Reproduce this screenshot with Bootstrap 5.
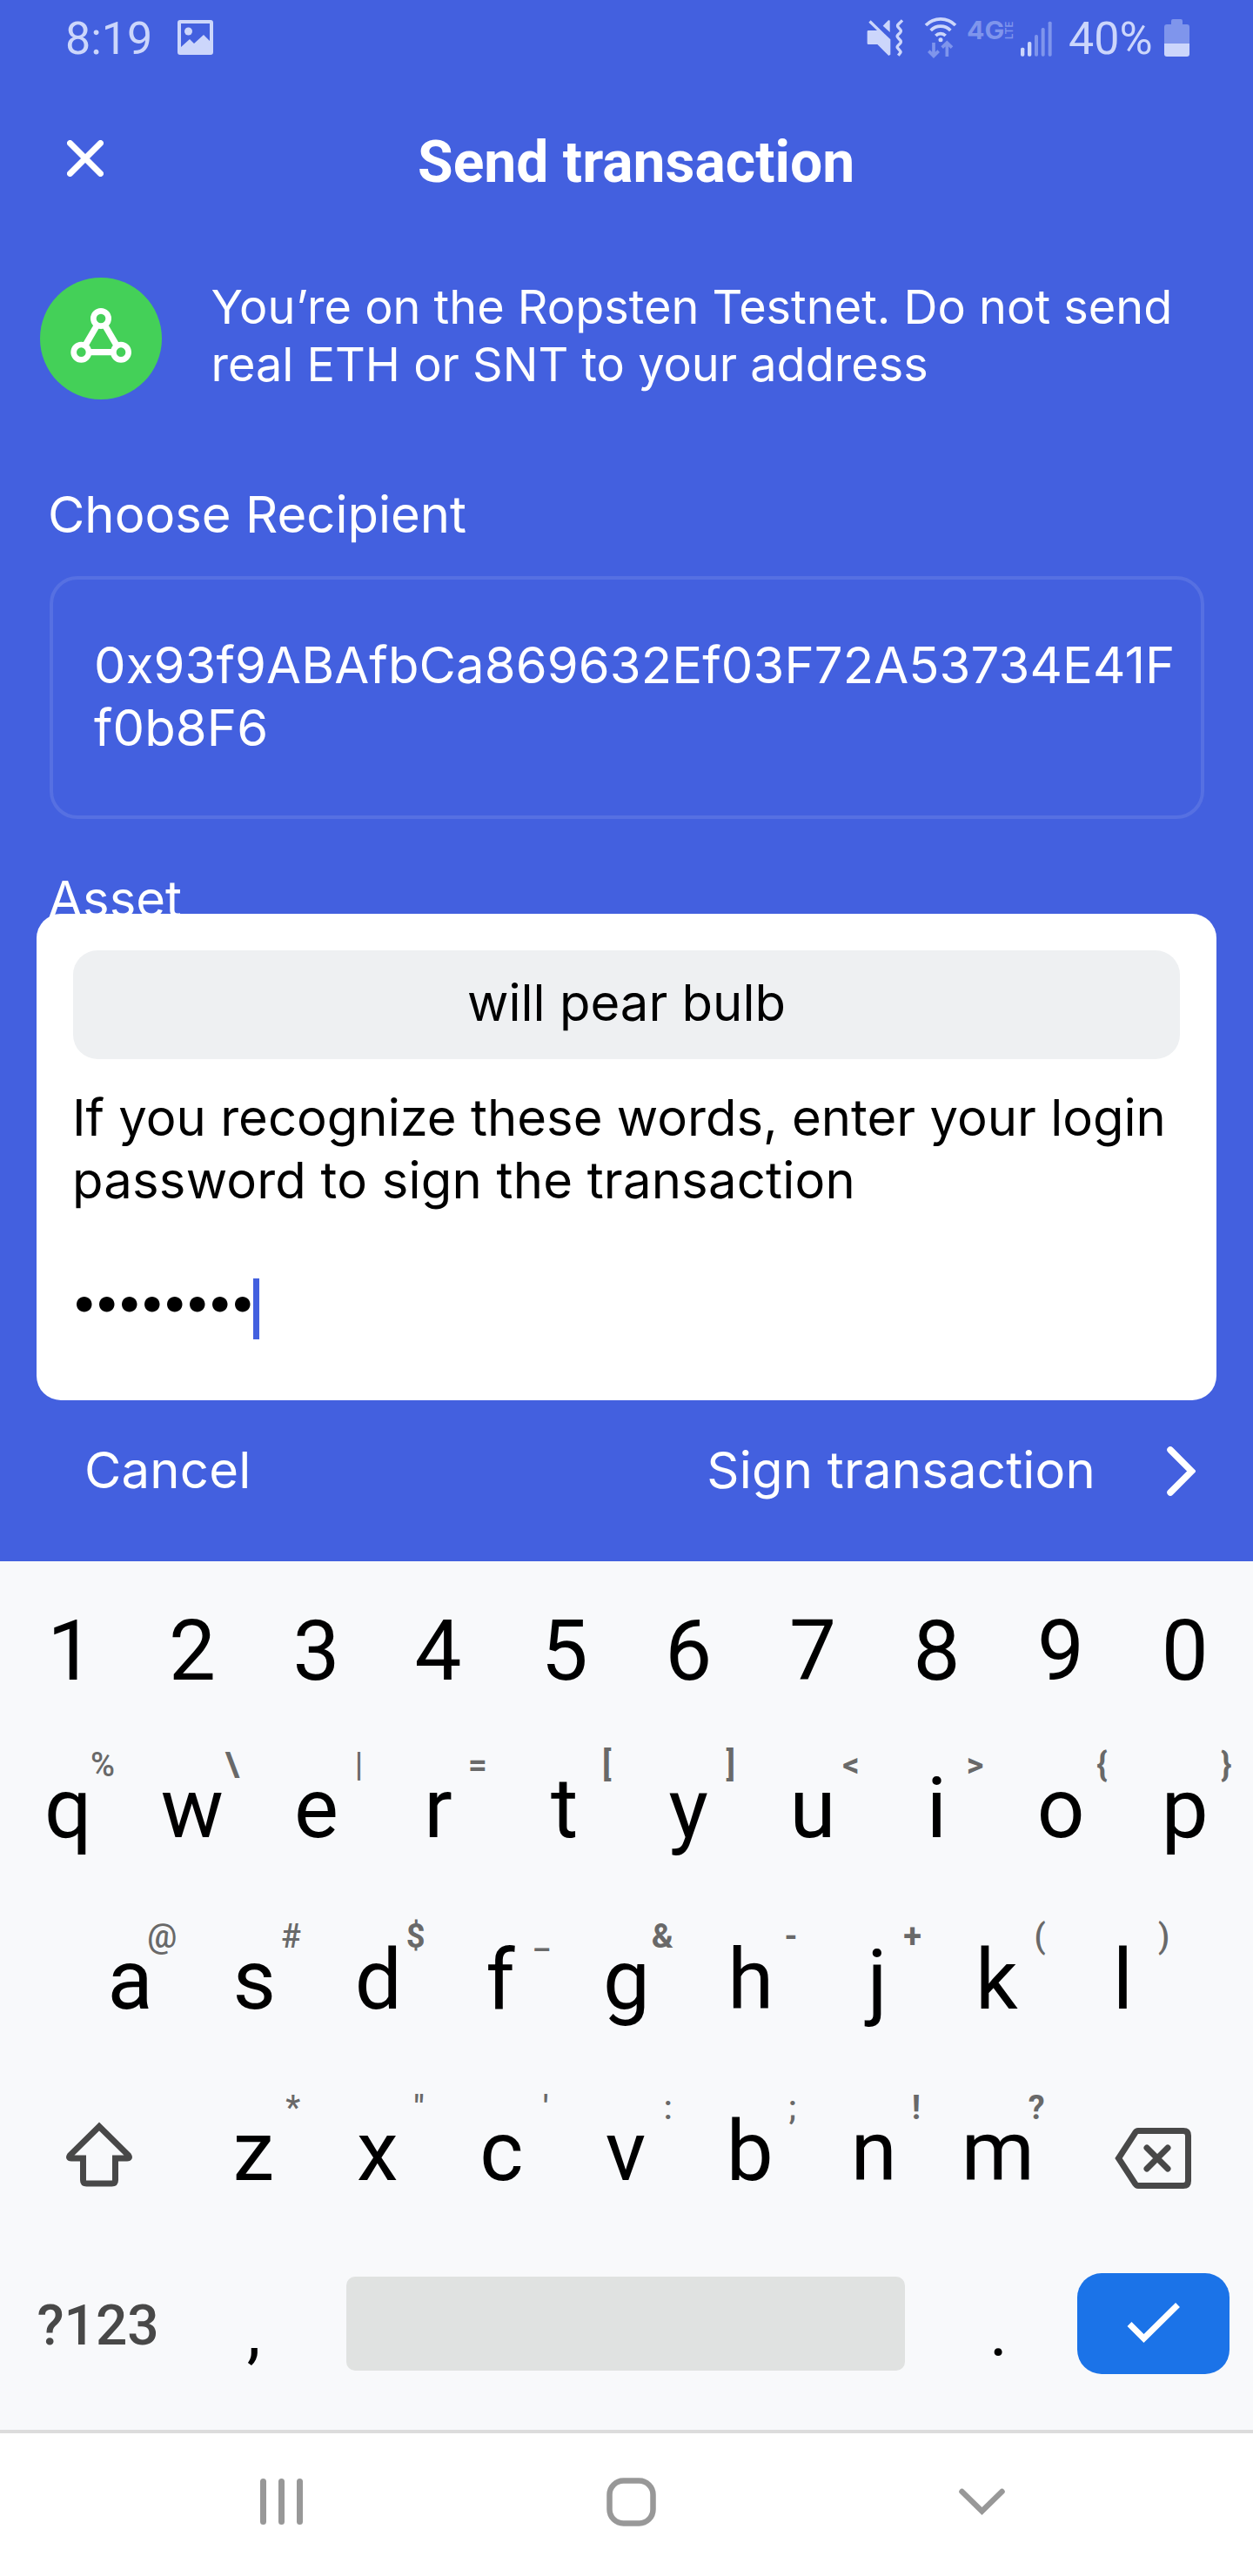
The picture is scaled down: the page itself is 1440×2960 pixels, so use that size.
<!DOCTYPE html>
<html lang="en">
<head>
<meta charset="utf-8">
<meta name="viewport" content="width=device-width, initial-scale=1">
<title>Send transaction</title>
<link href="https://cdn.jsdelivr.net/npm/bootstrap@5.3.0/dist/css/bootstrap.min.css" rel="stylesheet">
<style>
  body { width: 1440px; background: #fff; font-family: Inter, "Liberation Sans", sans-serif; font-size: 58px; line-height: 72px; color: #000; }
  svg { display: block; flex: none; }
  .wallet { height: 1794px; background: #4360df; color: #fff; }
  .statusbar { height: 90px; padding: 0 73.5px 0 75px; font: 400 52px/60px Roboto, sans-serif; color: #ccd6fb; }
  .clock { width: 129px; }
  .charge { width: 117.5px; padding-left: 8px; }
  .titlebar { height: 192px; padding-left: 77px; }
  .titlebar h1 { margin: 1px 0 0 361px; font: 700 66px/80px Roboto, sans-serif; }
  .network { padding: 37px 0 0 46px; gap: 56.5px; }
  .network p { font-size: 54px; line-height: 66px; width: 1120px; padding-top: .5px; }
  .form-area { padding: 96px 56px 0 57px; }
  .field-title { margin-left: -2px; }
  .recipient { height: 279px; margin: 35px 0 56px; padding: 61.5px 16px 0 47px; border: 4px solid rgba(255,255,255,.1); border-radius: 32px; letter-spacing: .1px; word-break: break-all; }
  .sign-card { height: 559px; margin: -19px 42px 0; padding: 42px; border-radius: 28px; }
  .phrase { height: 125px; padding-top: 24px; border-radius: 28px; background: #eef0f2; }
  .hint-text { margin: 30.5px 0 0 -1px; white-space: nowrap; }
  .hint-text .second { letter-spacing: .2px; }
  .password { height: 70px; margin: 77.5px 0 0 -3px; font-size: 56px; line-height: 52px; letter-spacing: -5.5px; }
  .caret { width: 7px; height: 70px; margin-left: 2px; background: #4360df; }
  .actions { padding: 43.5px 66px 0 97px; letter-spacing: .2px; }
  .go { gap: 82px; }
  .keyboard { height: 998px; background: #f8f9fb; font-family: Roboto, sans-serif; }
  .keyrow { height: 197px; padding: 0 7px; }
  .keyrow.digits { height: 181px; }
  .keycap { width: 142.6px; padding-top: 53px; font-size: 96px; line-height: 100px; }
  .lean-left { padding-right: 5px; }
  .lean-right { padding-left: 6px; }
  .alt { top: 31px; right: 17.5px; font-size: 38px; font-weight: 500; line-height: 44px; color: #696969; }
  .wide { width: 213px; }
  .bottomrow { height: 226px; padding-left: 7px; }
  .symbols { width: 211px; padding-top: 67px; font-size: 64px; font-weight: 500; line-height: 80px; color: #484848; }
  .punct { padding-top: 64px; font-size: 80px; line-height: 100px; }
  .comma { width: 145px; padding-left: 2px; }
  .dot { width: 143px; padding-left: 2px; }
  .spacebar { width: 642px; height: 108px; margin: 50px 35px 0; border-radius: 10px; background: #e0e2e1; }
  .enter { width: 175px; height: 116px; margin: 46px 0 0 20px; border-radius: 28px; background: #1b73e8; }
  .sysnav { height: 168px; padding: 0 285px 7px 299px; border-top: 4px solid #dcdcdc; }
</style>
<script src="https://cdn.jsdelivr.net/npm/bootstrap@5.3.0/dist/js/bootstrap.bundle.min.js"></script>
</head>
<body>
<main class="wallet">
  <div class="statusbar d-flex align-items-center">
    <span class="clock">8:19</span>
    <svg width="41" height="40" viewBox="0 0 41 40" class="mb-1"><path fill="#ccd6fb" fill-rule="evenodd" d="M3 0h35a3 3 0 0 1 3 3v34a3 3 0 0 1-3 3H3a3 3 0 0 1-3-3V3a3 3 0 0 1 3-3zM4 4v27l10-9 5 5 11-10 7 7V4z"/><circle cx="12.500" cy="13" r="4.500" fill="#ccd6fb"/></svg>
    <svg width="240" height="64" viewBox="0 0 720 192" class="ms-auto mb-1">
      <g fill="#ccd6fb">
        <path d="M62 37 130 103v52l-6 4-39-39H54q-4 0-4-4V76q0-4 4-4h30L55 44z"/>
        <path d="m104 56 19-19q5-2 5 3v38z"/>
        <circle cx="303" cy="104" r="7.500"/>
        <rect x="579" y="131" width="13" height="30" rx="5"/><rect x="603" y="111" width="13" height="50" rx="5"/>
      </g>
      <g fill="none" stroke="#ccd6fb" stroke-width="11">
        <path stroke-width="10" d="m171 37-14 14q-5 5 0 10l7 8q4 5 0 10l-8 8q-5 5 0 10l8 9q4 5 0 10l-8 8q-5 5 0 10l7 8q4 4 0 8l-6 8"/>
        <path d="M252 54a71 71 0 0 1 102 0M269 72a47 47 0 0 1 68 0M286 90a24 24 0 0 1 34 0"/>
      </g>
      <g fill="#7f95ec">
        <rect x="627" y="87" width="12" height="74" rx="5"/><rect x="650" y="63" width="12" height="98" rx="5"/><rect x="674" y="41" width="12" height="120" rx="5"/>
        <text x="393" y="101" font-family="Inter, sans-serif" font-weight="700" font-size="86" textLength="130" lengthAdjust="spacingAndGlyphs">4G</text>
        <text transform="translate(551 103) rotate(-90)" font-family="Inter, sans-serif" font-weight="600" font-size="36" textLength="63" lengthAdjust="spacingAndGlyphs">LTE</text>
      </g>
      <path fill="none" stroke="#7f95ec" stroke-width="11" d="M279 114v44M262 143l17 17 17-17M325 162v-44M308 131l17-17 17 17"/>
    </svg>
    <span class="charge">40%</span>
    <svg width="29" height="43" viewBox="0 0 29 43" class="mb-1"><path fill="#7f95ec" d="M8 2q0-2 2-2h9q2 0 2 2v4h5q3 0 3 3v20H0V9q0-3 3-3h5z"/><path fill="#ccd6fb" d="M0 28h29v12q0 3-3 3H3q-3 0-3-3z"/></svg>
  </div>

  <header class="titlebar d-flex align-items-center">
    <svg width="42" height="42" viewBox="0 0 42 42" class="mb-2"><path d="M3.500 3.500l35 35M38.500 3.500l-35 35" stroke="#fff" stroke-width="7" stroke-linecap="round"/></svg>
    <h1>Send transaction</h1>
  </header>

  <section class="network d-flex align-items-start">
    <svg width="140" height="140" viewBox="18 57 420 420"><circle cx="228" cy="267" r="210" fill="#44d058"/><path d="M214 222l-41 70M242 222l41 70M186 314h85" stroke="#fff" stroke-width="22"/><g fill="none" stroke="#fff" stroke-width="20"><circle cx="228" cy="198" r="26"/><circle cx="160" cy="314" r="26"/><circle cx="297" cy="314" r="26"/></g></svg>
    <p class="mb-0">You’re on the Ropsten Testnet. Do not send real ETH or SNT to your address</p>
  </section>

  <section class="form-area">
    <div class="field-title">Choose Recipient</div>
    <div class="recipient">0x93f9ABAfbCa869632Ef03F72A53734E41Ff0b8F6</div>
    <div class="field-title">Asset</div>
  </section>

  <section class="sign-card bg-white text-black position-relative">
    <div class="phrase text-center">will pear bulb</div>
    <p class="hint-text mb-0">If you recognize these words, enter your login<br><span class="second">password to sign the transaction</span></p>
    <div class="password d-flex align-items-start"><span>••••••••</span><span class="caret"></span></div>
  </section>

  <div class="actions d-flex justify-content-between align-items-center">
    <span>Cancel</span>
    <div class="go d-flex align-items-center">
      <span>Sign transaction</span>
      <svg width="33" height="57" viewBox="0 0 33 57" class="mt-1"><path d="M4 4l24.500 24.500L4 53" fill="none" stroke="#fff" stroke-width="7.500" stroke-linecap="round"/></svg>
    </div>
  </div>
</main>

<section class="keyboard text-center">
  <div class="keyrow digits d-flex">
    <div class="keycap lean-right">1</div><div class="keycap">2</div><div class="keycap">3</div><div class="keycap lean-left">4</div><div class="keycap">5</div><div class="keycap">6</div><div class="keycap">7</div><div class="keycap">8</div><div class="keycap">9</div><div class="keycap">0</div>
  </div>
  <div class="keyrow d-flex">
    <div class="keycap position-relative">q<span class="alt position-absolute">%</span></div>
    <div class="keycap position-relative">w<span class="alt position-absolute fw-bold">\</span></div>
    <div class="keycap position-relative">e<span class="alt position-absolute">|</span></div>
    <div class="keycap position-relative lean-left">r<span class="alt position-absolute fw-bold">=</span></div>
    <div class="keycap position-relative">t<span class="alt position-absolute fw-bold">[</span></div>
    <div class="keycap position-relative">y<span class="alt position-absolute fw-bold">]</span></div>
    <div class="keycap position-relative">u<span class="alt position-absolute fw-bold">&lt;</span></div>
    <div class="keycap position-relative">i<span class="alt position-absolute fw-bold">&gt;</span></div>
    <div class="keycap position-relative">o<span class="alt position-absolute fw-bold">{</span></div>
    <div class="keycap position-relative">p<span class="alt position-absolute fw-bold">}</span></div>
  </div>
  <div class="keyrow d-flex justify-content-center">
    <div class="keycap position-relative">a<span class="alt position-absolute">@</span></div>
    <div class="keycap position-relative">s<span class="alt position-absolute">#</span></div>
    <div class="keycap position-relative">d<span class="alt position-absolute fw-bold">$</span></div>
    <div class="keycap position-relative lean-left">f<span class="alt position-absolute">_</span></div>
    <div class="keycap position-relative">g<span class="alt position-absolute fw-bold">&amp;</span></div>
    <div class="keycap position-relative">h<span class="alt position-absolute fw-bold">-</span></div>
    <div class="keycap position-relative lean-right">j<span class="alt position-absolute fw-bold">+</span></div>
    <div class="keycap position-relative lean-left">k<span class="alt position-absolute">(</span></div>
    <div class="keycap position-relative">l<span class="alt position-absolute">)</span></div>
  </div>
  <div class="keyrow d-flex">
    <div class="wide d-flex justify-content-center">
      <svg width="78" height="75" viewBox="0 0 78 75" style="margin-top:68.500px"><path d="M39 5.500 5.500 38.500Q3 42 7 42H20.500V67q0 4 4 4h29q4 0 4-4V42H71q4 0 1.500-3.500z" fill="none" stroke="#484848" stroke-width="7"/></svg>
    </div>
    <div class="keycap position-relative">z<span class="alt position-absolute">*</span></div>
    <div class="keycap position-relative">x<span class="alt position-absolute">"</span></div>
    <div class="keycap position-relative">c<span class="alt position-absolute">'</span></div>
    <div class="keycap position-relative">v<span class="alt position-absolute">:</span></div>
    <div class="keycap position-relative">b<span class="alt position-absolute">;</span></div>
    <div class="keycap position-relative">n<span class="alt position-absolute fw-bold">!</span></div>
    <div class="keycap position-relative">m<span class="alt position-absolute fw-bold">?</span></div>
    <div class="wide d-flex justify-content-center">
      <svg width="88" height="70" viewBox="0 0 88 70" style="margin-top:76px"><path d="M27 3.500H79q5.500 0 5.500 5.500V61q0 5.500-5.500 5.500H27q-2 0-3.200-2L4.500 35 23.800 5.500q1.200-2 3.200-2z" fill="none" stroke="#484848" stroke-width="7"/><path d="M37 23l24 24M61 23L37 47" stroke="#484848" stroke-width="7" stroke-linecap="round"/></svg>
    </div>
  </div>
  <div class="bottomrow d-flex align-items-start">
    <div class="symbols">?123</div>
    <div class="punct comma">,</div>
    <div class="spacebar"></div>
    <div class="punct dot">.</div>
    <div class="enter d-flex align-items-center justify-content-center"><svg width="62" height="48" viewBox="0 0 62 48"><path d="M3 24.500 19.500 41 58.500 2.500" fill="none" stroke="#fff" stroke-width="7"/></svg></div>
  </div>
</section>

<nav class="sysnav d-flex align-items-center justify-content-between bg-white">
  <svg width="49" height="53" viewBox="0 0 49 53"><path d="M3.500 3.500v46M24.500 3.500v46M45.500 3.500v46" stroke="#989898" stroke-width="7" stroke-linecap="round"/></svg>
  <svg width="57" height="56" viewBox="0 0 57 56"><rect x="3.500" y="3.500" width="50" height="49" rx="16" fill="none" stroke="#989898" stroke-width="6.500"/></svg>
  <svg width="53" height="32" viewBox="0 0 53 32"><path d="M3.500 4 26.500 26.500 49.500 4" fill="none" stroke="#989898" stroke-width="6.500" stroke-linecap="round"/></svg>
</nav>
</body>
</html>
